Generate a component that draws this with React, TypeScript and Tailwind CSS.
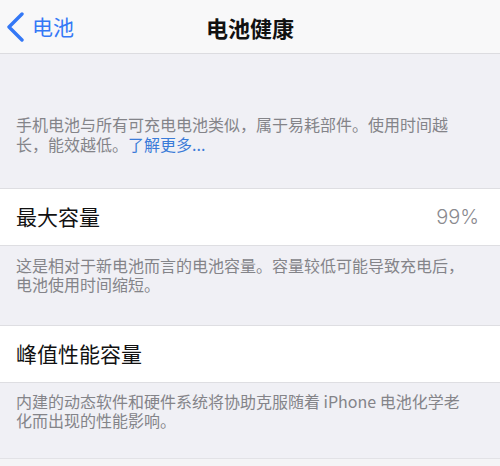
import React from 'react';

const App: React.FC = () => {
  return (
    <div className="w-[500px] h-[466px] overflow-hidden bg-[#f0f0f5] font-['Noto_Sans_CJK_SC','Noto_Sans',sans-serif]">
      {/* Nav bar */}
      <div className="h-[54px] bg-[#f8f8f9] border-b border-[#dcdce0] grid grid-cols-[1fr_auto_1fr] items-center">
        <div className="flex items-center pl-[6px] text-[#3478f6]">
          <svg width="20" height="30" viewBox="0 0 20 30" fill="none">
            <polyline points="16,2 3,15 16,28" stroke="currentColor" strokeWidth="3.4" strokeLinecap="round" strokeLinejoin="round" />
          </svg>
          <span className="ml-[6px] text-[21px] leading-none">电池</span>
        </div>
        <div className="text-[22px] font-semibold leading-none text-[#111]">电池健康</div>
        <div />
      </div>

      {/* Intro */}
      <p className="pt-[60px] pb-[34px] px-4 text-[16px] leading-[20px] text-[#848489]">
        手机电池与所有可充电电池类似，属于易耗部件。使用时间越
        <br />
        长，能效越低。<span className="text-[#3a7bd8]">了解更多...</span>
      </p>

      {/* Max capacity */}
      <div className="h-[58px] bg-white border-y border-[#dedee2] px-4 flex items-center justify-between">
        <span className="text-[21px] text-[#111]">最大容量</span>
        <span className="text-[20px] font-light text-[#8a8a8f] font-['Inter',sans-serif] pr-[5px]">99%</span>
      </div>
      <p className="pt-[10px] pb-[31px] px-4 text-[16px] leading-[19px] text-[#848489]">
        这是相对于新电池而言的电池容量。容量较低可能导致充电后，
        <br />
        电池使用时间缩短。
      </p>

      {/* Peak performance */}
      <div className="h-[58px] bg-white border-y border-[#dedee2] px-4 flex items-center">
        <span className="text-[21px] text-[#111]">峰值性能容量</span>
      </div>
      <div className="border-b border-[#e2e2e6]">
        <p className="pt-[9px] pb-[28px] px-4 text-[16px] leading-[19px] text-[#848489]">
          内建的动态软件和硬件系统将协助克服随着 iPhone 电池化学老
          <br />
          化而出现的性能影响。
        </p>
      </div>
      <div className="h-[10px] bg-[#f4f4f6]" />
    </div>
  );
};

export default App;
